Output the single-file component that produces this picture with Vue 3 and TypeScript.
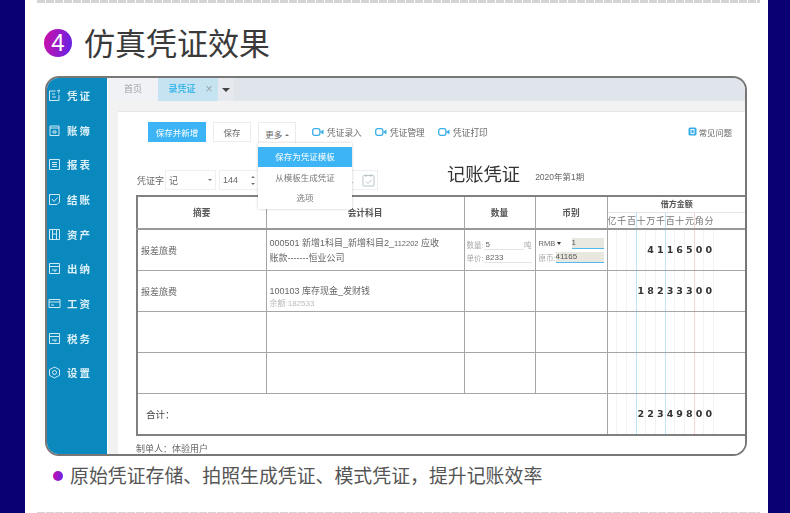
<template>
  <div class="page">
    <div class="dash"></div>

    <h2 class="heading">
      <span class="step">4</span>
      <span class="heading-text">仿真凭证效果</span>
    </h2>

    <div class="frame">
      <aside class="side">
        <div v-for="item in navItems" :key="item.label" class="nav-item">
          <svg class="nav-icon" width="13" height="13" viewBox="0 0 13 13">
            <path :d="item.icon" fill="none" stroke="#cfe9f5" stroke-width="1" />
          </svg>
          <span>{{ item.label }}</span>
        </div>
      </aside>

      <div class="main">
        <div class="tabs">
          <div class="tab">首页</div>
          <div class="tab tab-active">
            <span>录凭证</span>
            <span class="tab-close">×</span>
          </div>
          <div class="tab-more"><i class="caret"></i></div>
        </div>

        <div class="body">
          <div class="sheet">
            <div class="toolbar">
              <button class="btn btn-primary">保存并新增</button>
              <button class="btn">保存</button>
              <div class="more">
                <button class="btn btn-more">更多 <i class="up"></i></button>
                <ul class="menu">
                  <li class="menu-on">保存为凭证模板</li>
                  <li>从模板生成凭证</li>
                  <li>选项</li>
                </ul>
              </div>
              <a v-for="link in links" :key="link" class="link">
                <svg width="12" height="8" viewBox="0 0 12 8">
                  <rect x="0.7" y="0.7" width="7.2" height="6.6" rx="2" fill="none" stroke="#38aee6" stroke-width="1.3" />
                  <path d="M8 4 L11.5 1.5 V6.5 Z" fill="#38aee6" />
                </svg>
                {{ link }}
              </a>
              <a class="link help">
                <svg width="9" height="10" viewBox="0 0 9 10">
                  <rect x="0.5" y="0.5" width="8" height="8" rx="1.5" fill="#38aee6" />
                  <rect x="3" y="2.5" width="3" height="4" fill="none" stroke="#fff" stroke-width="0.9" />
                </svg>
                常见问题
              </a>
            </div>

            <div class="voucher-row">
              <span class="word-label">凭证字</span>
              <div class="field field-word">记<i class="down"></i></div>
              <div class="field field-num">144<span class="spin"><i class="up"></i><i class="down"></i></span></div>
              <div class="field field-date">1
                <svg width="13" height="14" viewBox="0 0 13 14">
                  <rect x="1" y="2.5" width="11" height="10.5" rx="1" fill="none" stroke="#b8c6cc" />
                  <path d="M4 1 V4 M9 1 V4 M4 8.5 L6 10.5 L9.5 7" fill="none" stroke="#b8c6cc" />
                </svg>
              </div>
              <div class="voucher-title">记账凭证</div>
              <div class="period">2020年第1期</div>
            </div>

            <table class="grid">
              <colgroup>
                <col style="width: 129px" />
                <col style="width: 198px" />
                <col style="width: 71px" />
                <col style="width: 72px" />
                <col style="width: 140px" />
              </colgroup>
              <thead>
                <tr>
                  <th>摘要</th>
                  <th>会计科目</th>
                  <th>数量</th>
                  <th>币别</th>
                  <th class="debit">
                    <div class="debit-title">借方金额</div>
                    <div class="digits digit-head">
                      <span v-for="(u, i) in units" :key="i" :class="cellClass(i)">{{ u }}</span>
                    </div>
                  </th>
                </tr>
              </thead>
              <tbody>
                <tr>
                  <td class="memo">报差旅费</td>
                  <td class="subject">000501 新增1科目_新增科目2_<small>112202</small> 应收账款-------恒业公司</td>
                  <td class="qty">
                    <div class="qty-line"><span>数量:</span><b>5</b><span>吨</span></div>
                    <div class="qty-line"><span>单价:</span><b>8233</b></div>
                  </td>
                  <td class="cur">
                    <div class="cur-line"><span class="rmb">RMB <i class="tri"></i></span><b>1</b></div>
                    <div class="cur-line"><span class="orig">原币:</span><b>41165</b></div>
                  </td>
                  <td class="money">
                    <div class="digits">
                      <span v-for="(d, i) in cells(4116500)" :key="i" :class="cellClass(i)">{{ d }}</span>
                    </div>
                  </td>
                </tr>
                <tr>
                  <td class="memo">报差旅费</td>
                  <td class="subject subject-balance">100103 库存现金_发财钱<div class="balance">余额:182533</div></td>
                  <td></td>
                  <td></td>
                  <td class="money">
                    <div class="digits">
                      <span v-for="(d, i) in cells(18233300)" :key="i" :class="cellClass(i)">{{ d }}</span>
                    </div>
                  </td>
                </tr>
                <tr v-for="n in 2" :key="n">
                  <td></td>
                  <td></td>
                  <td></td>
                  <td></td>
                  <td class="money">
                    <div class="digits">
                      <span v-for="(d, i) in cells(0)" :key="i" :class="cellClass(i)">{{ d }}</span>
                    </div>
                  </td>
                </tr>
                <tr>
                  <td colspan="4" class="total">合计：</td>
                  <td class="money">
                    <div class="digits">
                      <span v-for="(d, i) in cells(22349800)" :key="i" :class="cellClass(i)">{{ d }}</span>
                    </div>
                  </td>
                </tr>
              </tbody>
            </table>

            <div class="maker">制单人：体验用户</div>
          </div>
        </div>
      </div>
    </div>

    <div class="note">
      <span class="dot"></span>
      <span class="note-text">原始凭证存储、拍照生成凭证、模式凭证，提升记账效率</span>
    </div>

    <div class="dash dash-bottom"></div>
  </div>
</template>

<script setup lang="ts">
type NavItem = { label: string; icon: string };

const screenIcon = "M1.5 1.5 H11.5 V11.5 H1.5 Z M1.5 4.5 H11.5 M4 8 H9 M7 8 V10";

const navItems: NavItem[] = [
  { label: "凭证", icon: "M11 6 V11.5 H1.5 V2 H7.5 M4 5 H7 M4 8 H8 M9 2 L11.5 1 L10.5 4.5" },
  { label: "账簿", icon: "M2 2 H11 V11.5 H2 Z M2 4 H11 M5 7 H8 V9 H5 Z" },
  { label: "报表", icon: "M1.5 1.5 H11.5 V11.5 H1.5 Z M4 4.5 H9 M4 6.5 H9 M4 8.5 H9" },
  { label: "结账", icon: "M1.5 1.5 H11.5 V9 L9 11.5 H1.5 Z M4 6 L6 8.5 L9.5 4.5" },
  { label: "资产", icon: "M1.5 1.5 H11.5 V11.5 H1.5 Z M4.5 1.5 V11.5 M8.5 1.5 V11.5 M4.5 6 H8.5" },
  { label: "出纳", icon: screenIcon },
  { label: "工资", icon: "M1 2.5 H12 V10.5 H1 Z M1 5 H12 M3 8 H6" },
  { label: "税务", icon: screenIcon },
  { label: "设置", icon: "M6.5 1 L11.5 3.7 V9.3 L6.5 12 L1.5 9.3 V3.7 Z M6.5 4.5 A2 2 0 1 0 6.5 8.5 A2 2 0 1 0 6.5 4.5" },
];

const links = ["凭证录入", "凭证管理", "凭证打印"];
const units = ["亿", "千", "百", "十", "万", "千", "百", "十", "元", "角", "分"];

// 金额按分右对齐填进 11 个格子
function cells(amount: number): string[] {
  const text = amount ? String(amount) : "";
  return text.padStart(11, " ").split("");
}

function cellClass(i: number): string {
  if (i === 2 || i === 5) return "line-blue";
  if (i === 8) return "line-red";
  return "";
}
</script>

<style>
html,
body {
  margin: 0;
  background: #0b0073;
}
</style>

<style scoped>
.page {
  width: 743px;
  height: 513px;
  margin-left: 25px;
  background: #fff;
  overflow: hidden;
  font-family: "Liberation Sans", "Noto Sans CJK SC", sans-serif;
  color: #555;
}

.dash {
  width: 723px;
  height: 3px;
  margin-left: 12px;
  background: repeating-linear-gradient(to right, #d4d4d4 0 8px, #fff 8px 9px);
}

.dash-bottom {
  height: 1px;
  margin-top: 22px;
}

.heading {
  display: flex;
  align-items: center;
  gap: 12px;
  height: 28px;
  margin: 26px 0 19px 19px;
  font-size: 31px;
  font-weight: 400;
  color: #3a3a3a;
  font-family: "Noto Sans CJK SC", sans-serif;
}

.heading-text {
  margin-bottom: 4px;
}

.step {
  width: 28px;
  height: 28px;
  border-radius: 50%;
  background: linear-gradient(100deg, #d00fa5, #5f24ea);
  color: #fff;
  font-size: 24px;
  line-height: 28px;
  text-align: center;
  font-family: "Liberation Sans", sans-serif;
}

.frame {
  display: flex;
  box-sizing: border-box;
  width: 702px;
  height: 380px;
  margin-left: 20px;
  border: 2px solid #777;
  border-radius: 14px;
  overflow: hidden;
  font-size: 9px;
  filter: blur(0.35px);
}

.side {
  flex: none;
  width: 60px;
  background: #0989bd;
  color: #dcf0f9;
}

.nav-item {
  display: flex;
  align-items: center;
  height: 34.7px;
  padding-left: 1px;
  font-size: 10.5px;
  font-weight: 700;
  letter-spacing: 2px;
}

.nav-icon {
  flex: none;
  margin-right: 6px;
}

.main {
  flex: 1;
  min-width: 0;
  display: flex;
  flex-direction: column;
  margin-left: 1px;
}

.tabs {
  flex: none;
  display: flex;
  height: 23px;
  background: #e0e5ec;
  color: #9aa0a6;
}

.tab {
  width: 50px;
  line-height: 23px;
  text-align: center;
  background: #f0f2f5;
}

.tab-active {
  display: flex;
  justify-content: center;
  gap: 10px;
  width: 60px;
  box-sizing: border-box;
  padding-left: 5px;
  background: #c5e3f0;
  color: #45b8ec;
  font-weight: 700;
}

.tab-close {
  font-size: 12px;
  font-weight: 400;
  color: #9aa5ad;
}

.tab-more {
  display: flex;
  align-items: center;
  justify-content: center;
  width: 16px;
  background: #e6e9ee;
}

.caret {
  border: 4px solid transparent;
  border-top: 4px solid #444;
  border-bottom: 0;
}

.body {
  flex: 1;
  min-height: 0;
  padding: 10px 0 0 10px;
  background: #f2f2f2;
}

.sheet {
  height: 100%;
  padding: 10px 0 0 18px;
  box-sizing: border-box;
  background: #fff;
  border-top: 1px solid #e6e6e6;
}

.toolbar {
  display: flex;
  align-items: center;
  height: 20px;
  padding-left: 12px;
  width: 584px;
}

.btn {
  height: 20px;
  width: 38px;
  margin-right: 7px;
  padding: 0;
  border: 1px solid #e8ecef;
  background: #fff;
  color: #666;
  font: inherit;
  font-size: 8.5px;
}

.btn-primary {
  width: 58px;
  border: 0;
  background: #3db4f5;
  color: #fff;
}

.more {
  position: relative;
  margin-right: 9px;
}

.btn-more {
  display: block;
  margin-right: 0;
  height: 22px;
  margin-bottom: -2px;
  border-bottom: 0;
}

.up {
  display: inline-block;
  vertical-align: middle;
  border: 2px solid transparent;
  border-bottom: 2.5px solid #777;
  border-top: 0;
}

.down {
  display: inline-block;
  vertical-align: middle;
  border: 2px solid transparent;
  border-top: 2.5px solid #777;
  border-bottom: 0;
}

.menu {
  position: absolute;
  z-index: 2;
  top: 21px;
  left: 0;
  width: 94px;
  height: 66px;
  margin: 0;
  padding: 4px 0 0;
  box-sizing: border-box;
  list-style: none;
  background: #fff;
  box-shadow: 0 0 3px rgba(0, 0, 0, 0.2);
  color: #777;
  font-size: 8.5px;
  text-align: center;
}

.menu li {
  height: 20px;
  line-height: 20px;
}

.menu .menu-on {
  height: 20px;
  margin-bottom: 1px;
  background: #3db4f5;
  color: #fff;
}

.link {
  display: flex;
  align-items: center;
  gap: 3px;
  margin-left: 7px;
  margin-right: 3px;
  width: 53px;
  flex: none;
  color: #666;
  font-size: 8.7px;
}

.help {
  gap: 2px;
  margin-left: auto;
  margin-right: 0;
  width: auto;
  font-size: 8.3px;
}

.voucher-row {
  display: flex;
  align-items: center;
  height: 26px;
  margin-top: 25px;
  margin-bottom: 2px;
  padding-left: 1px;
  color: #666;
}

.word-label {
  width: 28px;
}

.field {
  display: flex;
  align-items: center;
  justify-content: space-between;
  box-sizing: border-box;
  height: 20px;
  border: 1px solid #edf0f2;
  padding: 0 3px;
}

.field-word {
  width: 51px;
  margin-right: 3px;
}

.field-num {
  width: 40px;
}

.spin {
  display: flex;
  flex-direction: column;
  gap: 5px;
}

.field-date {
  width: 34px;
  margin-left: 85px;
  padding-right: 2px;
}

.voucher-title {
  margin-left: 69px;
  margin-top: -14px;
  font-size: 18.3px;
  color: #333;
  font-family: "Noto Sans CJK SC", sans-serif;
}

.period {
  margin-left: 15px;
  margin-top: -8px;
  font-size: 8.5px;
}

.grid {
  width: 610px;
  table-layout: fixed;
  border-collapse: collapse;
  border: 2px solid #808080;
  color: #666;
}

.grid th,
.grid td {
  padding: 0;
  border: 1px solid #a6a6a6;
  font-weight: 400;
  height: 40px;
}

.grid thead th {
  height: 31px;
  font-weight: 700;
  color: #555;
  font-size: 8.7px;
  border-bottom: 2px solid #999;
}

.grid td.money,
.grid th.debit {
  vertical-align: top;
}

.debit-title {
  box-sizing: border-box;
  height: 16px;
  line-height: 15px;
  font-size: 8px;
  border-bottom: 1px solid #e4e4e4;
}

.digits {
  display: flex;
  height: 40px;
  line-height: 40px;
  font-size: 9.5px;
  font-weight: 700;
  color: #333;
}

.digits span {
  flex: none;
  width: 9.7px;
  box-sizing: border-box;
  border-right: 1px solid #f3f3f3;
  text-align: center;
  white-space: pre;
  font-family: "DejaVu Sans", sans-serif;
}

.digits .line-blue {
  border-right-color: #bfe4fa;
}

.digits .line-red {
  border-right-color: #f9d4d4;
}

.digit-head {
  height: 15px;
  line-height: 15px;
}

.digit-head span {
  font-family: "Noto Sans CJK SC", sans-serif;
  font-size: 9px;
  font-weight: 400;
  color: #777;
  border-right-color: transparent;
}

.memo {
  padding-left: 3px !important;
  font-size: 9px;
}

.subject {
  padding: 0 22px 0 3px !important;
  font-size: 9px;
  line-height: 14px;
  word-break: break-all;
}

.grid .subject-balance {
  height: 28px;
  padding-top: 12px !important;
}

.subject small {
  font-size: 7.5px;
}

.balance {
  font-size: 8px;
  line-height: 12px;
  color: #bbb;
}

.qty,
.cur {
  font-size: 7.5px;
  color: #aaa;
}

.qty-line {
  display: flex;
  align-items: flex-end;
  height: 13px;
  margin: 0 3px 0 2px;
}

.qty-line span {
  white-space: nowrap;
}

.qty-line b {
  flex: 1;
  font-weight: 400;
  color: #666;
  border-bottom: 1px solid #e4e4e4;
  font-size: 8px;
  padding-left: 2px;
}

.cur-line {
  display: flex;
  align-items: center;
  height: 14px;
  margin: 0 3px;
}

.cur-line b {
  flex: 1;
  height: 10px;
  line-height: 10px;
  font-weight: 400;
  color: #555;
  background: #e9e8e0;
  border-bottom: 1px solid #52b8ee;
  font-size: 8px;
}

.rmb {
  width: 33px;
  color: #666;
  white-space: nowrap;
}

.orig {
  width: 17px;
  white-space: nowrap;
}

.tri {
  display: inline-block;
  vertical-align: middle;
  border: 2px solid transparent;
  border-top: 3px solid #333;
  border-bottom: 0;
}

.total {
  padding-left: 8px !important;
  font-size: 9.5px;
  font-weight: 700;
  color: #444;
}

.maker {
  margin-top: 8px;
  font-size: 9px;
  line-height: 11px;
  color: #666;
}

.note {
  display: flex;
  align-items: center;
  gap: 7px;
  height: 28px;
  margin: 6px 0 0 28px;
  font-size: 18.9px;
  color: #555;
  font-family: "Noto Sans CJK SC", sans-serif;
}

.note-text {
  margin-bottom: 3px;
}

.dot {
  width: 10px;
  height: 10px;
  border-radius: 50%;
  background: linear-gradient(100deg, #d00fa5, #5f24ea);
}
</style>
